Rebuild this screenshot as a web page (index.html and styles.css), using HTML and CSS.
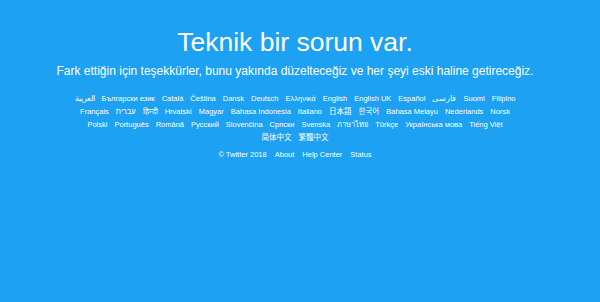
FILE: index.html
```html
<!DOCTYPE html>
<html lang="tr">
<head>
    <meta charset="UTF-8">
    <meta name="viewport" content="width=device-width, initial-scale=1.0">
    <title>Twitter / Hata</title>
    <link rel="stylesheet" href="styles.css">
</head>
<body>
    <div class="error-page">
        <h1 class="title">Teknik bir sorun var.</h1>
        <p class="message">Fark ettiğin için teşekkürler, bunu yakında düzelteceğiz ve her şeyi eski haline getireceğiz.</p>
        <ul class="languages">
            <li><a href="#" lang="ar">العربية</a></li>
            <li><a href="#">Български език</a></li>
            <li><a href="#">Català</a></li>
            <li><a href="#">Čeština</a></li>
            <li><a href="#">Dansk</a></li>
            <li><a href="#">Deutsch</a></li>
            <li><a href="#">Ελληνικά</a></li>
            <li><a href="#">English</a></li>
            <li><a href="#">English UK</a></li>
            <li><a href="#">Español</a></li>
            <li><a href="#" lang="fa">فارسی</a></li>
            <li><a href="#">Suomi</a></li>
            <li><a href="#">Filipino</a></li>
            <li><a href="#">Français</a></li>
            <li><a href="#" lang="he">עברית</a></li>
            <li><a href="#">हिन्दी</a></li>
            <li><a href="#">Hrvatski</a></li>
            <li><a href="#">Magyar</a></li>
            <li><a href="#">Bahasa Indonesia</a></li>
            <li><a href="#">Italiano</a></li>
            <li><a href="#" lang="ja">日本語</a></li>
            <li><a href="#" lang="ko">한국어</a></li>
            <li><a href="#">Bahasa Melayu</a></li>
            <li><a href="#">Nederlands</a></li>
            <li><a href="#">Norsk</a></li>
            <li><a href="#">Polski</a></li>
            <li><a href="#">Português</a></li>
            <li><a href="#">Română</a></li>
            <li><a href="#">Русский</a></li>
            <li><a href="#">Slovenčina</a></li>
            <li><a href="#">Српски</a></li>
            <li><a href="#">Svenska</a></li>
            <li><a href="#">ภาษาไทย</a></li>
            <li><a href="#">Türkçe</a></li>
            <li><a href="#">Українська мова</a></li>
            <li><a href="#">Tiếng Việt</a></li>
            <li><a href="#" lang="zh-CN">简体中文</a></li>
            <li><a href="#" lang="zh-TW">繁體中文</a></li>
        </ul>
        <ul class="footer">
            <li>&copy; Twitter 2018</li>
            <li><a href="#">About</a></li>
            <li><a href="#">Help Center</a></li>
            <li><a href="#">Status</a></li>
        </ul>
    </div>
</body>
</html>
```

FILE: styles.css
```css
html, body {
    height: 100%;
}
body {
    margin: 0;
    background-color: #1da1f2;
    color: #fff;
    font-family: "Liberation Sans", Arial, "Noto Sans CJK SC", sans-serif;
    text-align: center;
}
a {
    color: #fff;
    text-decoration: none;
}
.error-page {
    padding: 26px 10px 0 0;
}
.title {
    margin: 0;
    font-size: 26.5px;
    font-weight: normal;
    line-height: 32px;
}
.message {
    margin: 4px 0 0;
    font-size: 12px;
    line-height: 18px;
}
.languages {
    list-style: none;
    width: 448px;
    margin: 12px auto 0;
    padding: 0;
    display: flex;
    flex-wrap: wrap;
    justify-content: center;
    column-gap: 7px;
    font-size: 7.5px;
    line-height: 13px;
}
.footer {
    list-style: none;
    margin: 4px 0 0;
    padding: 0;
    display: flex;
    justify-content: center;
    gap: 8px;
    font-size: 7.5px;
    line-height: 13px;
}
```
